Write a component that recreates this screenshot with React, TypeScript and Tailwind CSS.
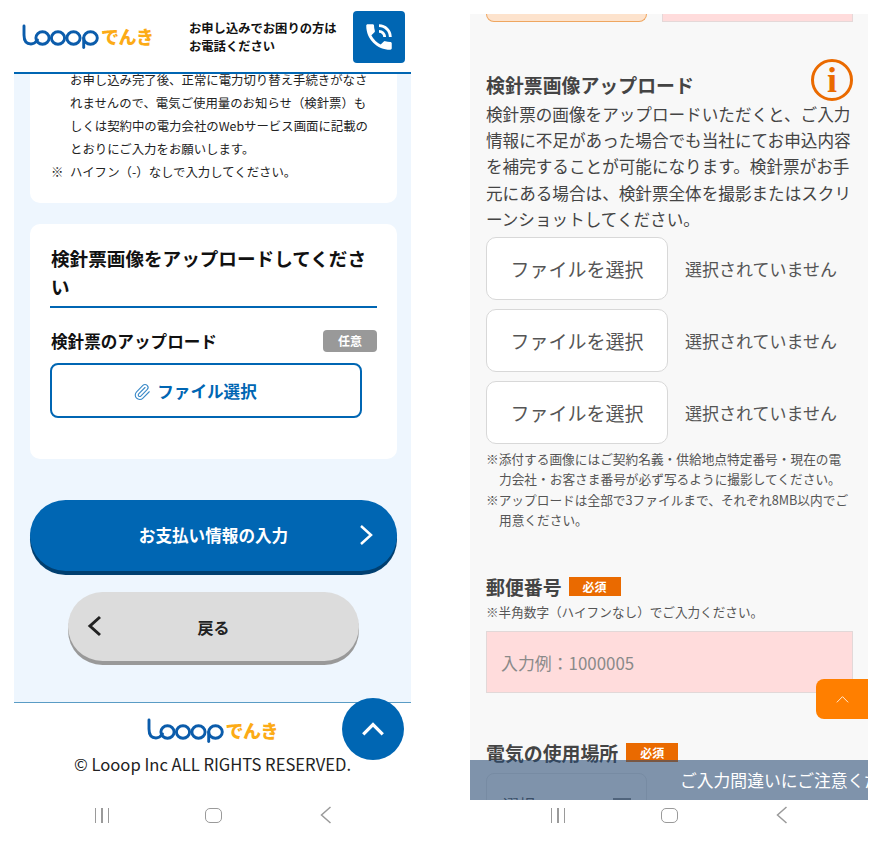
import React from 'react';
import { Paperclip } from 'lucide-react';
import { MdPhoneInTalk } from 'react-icons/md';

const Logo: React.FC = () => (
  <div className="flex items-center w-[132px] h-[26px]">
    <svg width="78" height="26" viewBox="0 0 78 26" fill="none" stroke="#0b5cab" strokeWidth="2.9" strokeLinecap="round">
      <path d="M2 3 V12 Q2 21 9 21 Q12.5 21 15.5 17" />
      <ellipse cx="20.5" cy="15" rx="6.6" ry="6.2" />
      <ellipse cx="36" cy="15" rx="6.6" ry="6.2" />
      <ellipse cx="51.5" cy="15" rx="6.6" ry="6.2" />
      <ellipse cx="68.5" cy="15" rx="6.8" ry="6.2" />
      <path d="M61.7 15 V24.5" />
    </svg>
    <span className="ml-[1px] text-[#fcab16] text-[18px] leading-none font-black whitespace-nowrap tracking-[-0.5px]">でんき</span>
  </div>
);

const Chevron: React.FC<{ d: string; className: string; w?: number }> = ({ d, className, w = 2.5 }) => (
  <svg viewBox="0 0 24 24" fill="none" stroke="currentColor" strokeWidth={w} className={className}>
    <path d={d} />
  </svg>
);

const NavBar: React.FC = () => (
  <div className="ml-[32px] w-[336px] grid grid-cols-3 justify-items-center items-center h-[28px]">
    <div className="flex gap-[5px]">
      <div className="w-[1.5px] h-[15px] bg-[#9a9a9a]" />
      <div className="w-[1.5px] h-[15px] bg-[#9a9a9a]" />
      <div className="w-[1.5px] h-[15px] bg-[#9a9a9a]" />
    </div>
    <div className="-ml-[2px] w-[17px] h-[15px] rounded-[5px] border-[1.5px] border-[#9a9a9a]" />
    <svg width="12" height="18" viewBox="0 0 12 18" fill="none" stroke="#9a9a9a" strokeWidth="1.5">
      <path d="M10.5 1 L1.5 9 L10.5 17" />
    </svg>
  </div>
);

const LeftPhone: React.FC = () => (
  <div className="ml-[14px] w-[397px] shrink-0 flex flex-col relative">
    <header className="h-[74px] border-b-2 border-[#0066b3] flex items-center">
      <div className="ml-[8px]">
        <Logo />
      </div>
      <p className="ml-[35px] mt-[2px] w-[160px] text-[12.3px] leading-[18px] font-bold text-[#111]">
        お申し込みでお困りの方は<br />お電話ください
      </p>
      <div className="ml-[4px] mt-[2px] w-[52px] h-[52px] rounded-[4px] bg-[#0066b3] flex items-center justify-center text-white">
        <MdPhoneInTalk size={34} />
      </div>
    </header>
    <main className="h-[628px] bg-[#eef6fe] pl-[16px] pr-[14px] flex flex-col">
      <section className="h-[129px] bg-white rounded-b-[10px] pl-[21px] pr-[12px] text-[12.4px] leading-[23px] text-[#222]">
        <div className="pl-[19px] whitespace-nowrap -mt-[5px]">
          お申し込み完了後、正常に電力切り替え手続きがなさ<br />
          れませんので、電気ご使用量のお知らせ（検針票）も<br />
          しくは契約中の電力会社のWebサービス画面に記載の<br />
          とおりにご入力をお願いします。
        </div>
        <div className="flex whitespace-nowrap">
          <span className="w-[19px]">※</span>ハイフン（-）なしで入力してください。
        </div>
      </section>
      <section className="mt-[21px] h-[235px] bg-white rounded-[10px] px-[20px] pt-[20px]">
        <h2 className="pl-[1px] text-[18.6px] leading-[28px] font-bold text-[#111] pb-[6px] border-b-2 border-[#0066b3]">
          検針票画像をアップロードしてください
        </h2>
        <div className="mt-[21px] flex items-center justify-between">
          <span className="pl-[1px] text-[16.6px] leading-[24px] font-bold text-[#111]">検針票のアップロード</span>
          <span className="w-[54px] h-[22px] rounded-[4px] bg-[#999] text-white text-[12px] font-bold flex items-center justify-center">任意</span>
        </div>
        <button className="mt-[10px] w-[312px] h-[55px] pr-[22px] pt-[2px] rounded-[8px] border-2 border-[#0066b3] flex items-center justify-center text-[#0066b3] text-[16.6px] font-bold">
          <Paperclip size={18} strokeWidth={1.5} className="mr-[6px] text-[#3b8ac8]" />
          ファイル選択
        </button>
      </section>
      <button className="relative mt-[41px] h-[71px] shrink-0 rounded-full bg-[#0066b3] shadow-[0_4px_0_#003f70] flex items-center justify-center text-white text-[16.6px] font-bold">
        お支払い情報の入力
        <Chevron d="M7 3 L17 12 L7 21" className="absolute right-[19px] top-[23px] w-[24px] h-[24px]" />
      </button>
      <button className="relative mt-[21px] mx-[38px] h-[69px] shrink-0 rounded-full bg-[#dcdcdc] shadow-[0_4px_0_#999] flex items-center justify-center text-[#222] text-[16px] font-bold">
        戻る
        <Chevron d="M17 3 L7 12 L17 21" className="absolute left-[15px] top-[22px] w-[24px] h-[24px]" w={3} />
      </button>
    </main>
    <footer className="h-[99px] border-t border-[#5a9cc5] flex flex-col items-center pt-[14px]">
      <Logo />
      <p className="mt-[9px] text-[16.6px] leading-[24px] text-[#222] whitespace-nowrap">© Looop Inc ALL RIGHTS RESERVED.</p>
    </footer>
    <NavBar />
    <a className="absolute left-[328px] top-[698px] w-[62px] h-[62px] rounded-full bg-[#0066b3] flex items-center justify-center text-white">
      <Chevron d="M3 17 L12 8 L21 17" className="w-[26px] h-[26px]" w={3} />
    </a>
  </div>
);

const FileRow: React.FC = () => (
  <div className="flex items-center">
    <button className="w-[182px] h-[63px] pt-[1px] rounded-[10px] border border-[#d8d8d8] bg-white text-[#555] text-[19px] whitespace-nowrap">ファイルを選択</button>
    <span className="ml-[17px] pt-[1px] text-[17px] text-[#555] whitespace-nowrap">選択されていません</span>
  </div>
);

const Required: React.FC<{ className: string }> = ({ className }) => (
  <span className={`w-[52px] h-[19px] bg-[#ea6a00] text-white text-[12px] font-bold flex items-center justify-center ${className}`}>必須</span>
);

const RightPhone: React.FC = () => (
  <div className="ml-[59px] w-[398px] shrink-0 flex flex-col">
    <div className="mt-[14px] h-[786px] bg-[#f8f8f8] relative overflow-hidden pl-[16px] pr-[15px]">
      <div className="flex gap-[15px]">
        <div className="w-[161px] h-[8px] bg-[#fde3cd] border border-t-0 border-[#efa660] rounded-b-[8px]" />
        <div className="w-[191px] h-[8px] bg-[#ffdcdc] border border-t-0 border-[#e5d8d8]" />
      </div>
      <div className="mt-[37px] flex justify-end h-[42px]">
        <div className="w-[42px] h-[42px] rounded-full border-[3px] border-[#ea6a00] flex items-center justify-center text-[#ea6a00] text-[36px] leading-none font-bold font-['Liberation_Serif']">i</div>
      </div>
      <h2 className="-mt-[30px] text-[18.9px] leading-[28px] font-bold text-[#444]">検針票画像アップロード</h2>
      <p className="mt-[2px] text-[16.6px] leading-[26.2px] text-[#444] whitespace-nowrap">
        検針票の画像をアップロードいただくと、ご入力<br />
        情報に不足があった場合でも当社にてお申込内容<br />
        を補完することが可能になります。検針票がお手<br />
        元にある場合は、検針票全体を撮影またはスクリ<br />
        ーンショットしてください。
      </p>
      <div className="mt-[5px] flex flex-col gap-[9px]">
        <FileRow />
        <FileRow />
        <FileRow />
      </div>
      <div className="mt-[5px] text-[12.7px] leading-[20.4px] text-[#555] whitespace-nowrap">
        <p className="pl-[13px] -indent-[13px]">※添付する画像にはご契約名義・供給地点特定番号・現在の電<br />力会社・お客さま番号が必ず写るように撮影してください。</p>
        <p className="pl-[13px] -indent-[13px]">※アップロードは全部で3ファイルまで、それぞれ8MB以内でご<br />用意ください。</p>
      </div>
      <div className="mt-[43px] flex items-center">
        <span className="text-[18.9px] leading-[26px] font-bold text-[#444]">郵便番号</span>
        <Required className="ml-[7px]" />
      </div>
      <p className="mt-[2px] text-[12.6px] leading-[20px] text-[#555] whitespace-nowrap">※半角数字（ハイフンなし）でご入力ください。</p>
      <div className="mt-[9px] w-[367px] h-[62px] pt-[2px] bg-[#ffdcdc] border border-[#e2d8d8] flex items-center pl-[14px] text-[16.9px] text-[#8a8a8a]">入力例：1000005</div>
      <div className="mt-[47px] flex items-center">
        <span className="text-[18.9px] leading-[26px] font-bold text-[#444] whitespace-nowrap">電気の使用場所</span>
        <Required className="ml-[8px]" />
      </div>
      <div className="relative mt-[7px] w-[161px] h-[60px] rounded-[8px] border border-[#e4e4e4] bg-[#f8f8f8] pl-[16px] pt-[18px] text-[16px] text-[#555]">
        選択
        <div className="absolute right-[15px] top-[24px] w-[18px] h-[10px] bg-[#888]" />
      </div>
      <div className="absolute right-0 top-[665px] w-[52px] h-[40px] rounded-l-[8px] bg-[#ff7f00] flex items-center justify-center text-white">
        <Chevron d="M4 16 L12 8 L20 16" className="w-[17px] h-[17px]" w={1.2} />
      </div>
      <div className="absolute left-0 right-0 bottom-0 h-[40px] bg-[rgba(40,74,115,0.58)] overflow-hidden">
        <span className="absolute left-[210px] top-[8px] text-[16.8px] leading-[24px] text-white whitespace-nowrap">ご入力間違いにご注意ください</span>
      </div>
    </div>
    <div className="mt-[1px]">
      <NavBar />
    </div>
  </div>
);

const App: React.FC = () => (
  <div className="w-[892px] h-[851px] overflow-hidden bg-white flex font-['Noto_Sans_CJK_JP','Noto_Sans',sans-serif]">
    <LeftPhone />
    <RightPhone />
  </div>
);

export default App;
